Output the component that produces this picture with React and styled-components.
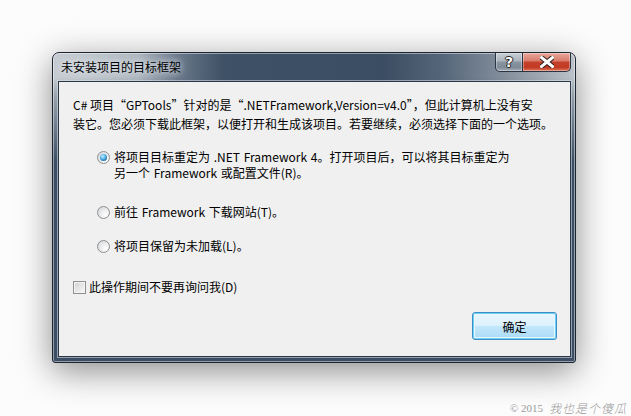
import React from 'react'
import styled, { createGlobalStyle } from 'styled-components'

const Global = createGlobalStyle`
  html, body { margin: 0; padding: 0; }
  body {
    background: #fcfcfc;
    font-family: "Noto Sans CJK SC", "Liberation Sans", sans-serif;
    font-size: 12px;
    color: #000;
  }
`

const Page = styled.div`
  width: 631px;
  height: 416px;
  box-sizing: border-box;
  padding: 52px 0 0 52px;
  display: flex;
  flex-direction: column;
  overflow: hidden;
`

const Window = styled.div`
  width: 524px;
  height: 311px;
  box-sizing: border-box;
  border: 1px solid #1c2633;
  border-radius: 7px 7px 3px 3px;
  display: flex;
  flex-direction: column;
  padding: 0 4px 5px 5px;
  background:
    linear-gradient(to bottom, rgba(60,78,98,0) 24px, rgba(60,78,98,0.35) 45px, #3c4e63 110px),
    linear-gradient(to right, #c6ccd2 0, #bfc5cc 40px, #aeb6bf 85px, #6a788a 125px, #3f5166 170px,
      #3b4d62 330px, #56667a 390px, #838e9b 450px, #a0a9b3 490px, #bcc3ca 100%);
  box-shadow: 0 8px 34px rgba(0,0,0,0.45), inset 0 0 0 1px rgba(255,255,255,0.45);
`

const TitleBar = styled.div`
  height: 28px;
  display: flex;
  align-items: flex-start;
  justify-content: space-between;
`

const Title = styled.span`
  margin: 6px 0 0 3px;
  line-height: 16px;
  color: #000;
  text-shadow: 0 0 6px rgba(235,240,245,0.95), 0 0 10px rgba(235,240,245,0.8);
`

const Controls = styled.div`
  display: flex;
`

const CtlButton = styled.div`
  height: 19px;
  width: ${p => p.$w}px;
  box-sizing: border-box;
  border: 1px solid #2b3440;
  border-top: none;
  display: flex;
  align-items: center;
  justify-content: center;
  box-shadow: inset 0 0 0 1px rgba(255,255,255,0.35);
  border-radius: ${p => p.$r};
  background: ${p => p.$red
    ? 'linear-gradient(to bottom, #e9a99a 0%, #d9796a 45%, #c5402a 50%, #c13a24 80%, #e07a5e 100%)'
    : 'linear-gradient(to bottom, #c8ced5 0%, #aab3bd 45%, #8a95a2 50%, #7f8a97 80%, #a5afba 100%)'};
  & + & { border-left: none; }
`

const Help = styled.span`
  font-family: "DejaVu Sans", sans-serif;
  font-weight: bold;
  font-size: 14px;
  line-height: 1;
  color: #fff;
  text-shadow: -1px 0 #222, 1px 0 #222, 0 -1px #222, 0 1px #222;
`

const Client = styled.div`
  flex: 1;
  background: #f0f0f0;
  border: 1px solid #2a3745;
  box-shadow: 0 0 0 1px rgba(220,228,236,0.55);
  display: flex;
  flex-direction: column;
  padding: 0 13px 0 14px;
`

const Message = styled.p`
  margin: 13px 0 0;
  line-height: 19px;
  white-space: nowrap;
`

const Options = styled.div`
  display: flex;
  flex-direction: column;
  padding-left: 24px;
`

const Option = styled.label`
  display: flex;
  align-items: flex-start;
  gap: 4px;
  margin-top: ${p => p.$mt}px;
  line-height: 16px;
  white-space: nowrap;
  word-spacing: 1px;
`

const Radio = styled.span`
  width: 13px;
  height: 13px;
  box-sizing: border-box;
  margin-top: 2px;
  flex: none;
  border-radius: 50%;
  border: 1px solid #8c8f93;
  background: radial-gradient(circle at 70% 70%, #ffffff 0%, #eeeeee 40%, #cfd1d3 100%);
  display: flex;
  align-items: center;
  justify-content: center;
  &::after {
    content: '';
    display: ${p => (p.$checked ? 'block' : 'none')};
    width: 7px;
    height: 7px;
    border-radius: 50%;
    background: radial-gradient(circle at 40% 35%, #c9eeff 0%, #58b4ea 40%, #1f6ea8 75%, #123f66 100%);
  }
`

const CheckRow = styled.label`
  display: flex;
  align-items: center;
  gap: 3px;
  margin-top: 25px;
  line-height: 16px;
`

const Box = styled.span`
  width: 13px;
  height: 13px;
  box-sizing: border-box;
  flex: none;
  border: 1px solid #8e8f8f;
  background: linear-gradient(135deg, #d0d0d0 0%, #e6e6e6 50%, #f8f8f8 100%);
  box-shadow: inset 0 0 0 1px #f4f4f4;
`

const Footer = styled.div`
  margin-top: auto;
  display: flex;
  justify-content: flex-end;
  padding-bottom: 16px;
`

const OkButton = styled.button`
  width: 85px;
  height: 28px;
  border: 1px solid #3c8dc8;
  border-radius: 3px;
  font: inherit;
  color: #000;
  box-shadow: inset 0 0 0 1px #6fd0f6, inset 0 0 0 2px #e8f7fe;
  background: linear-gradient(to bottom, #eaf6fd 0%, #dcf1fc 48%, #c2e7fc 52%, #abdbf6 100%);
`

const Credit = styled.div`
  margin: 36px 4px 0 0;
  align-self: flex-end;
  color: #9a9a9a;
  font-size: 11px;
  display: flex;
  gap: 6px;
  align-items: center;
`

const Year = styled.span`
  font-family: "Liberation Serif", serif;
  font-size: 11px;
`

const Signature = styled.span`
  font-family: "Noto Sans CJK SC", sans-serif;
  font-style: italic;
  font-weight: 300;
  font-size: 12px;
  letter-spacing: 1px;
`

export default function App() {
  return (
    <>
      <Global />
      <Page>
        <Window>
          <TitleBar>
            <Title>未安装项目的目标框架</Title>
            <Controls>
              <CtlButton $w={28} $r="0 0 0 5px"><Help>?</Help></CtlButton>
              <CtlButton $w={48} $r="0 0 5px 0" $red>
                <svg width="14" height="12" viewBox="0 0 14 12">
                  <path d="M1.5 1.5 L12.5 10.5 M12.5 1.5 L1.5 10.5" stroke="#2a1a18" strokeWidth="5" strokeLinecap="square" />
                  <path d="M1.5 1.5 L12.5 10.5 M12.5 1.5 L1.5 10.5" stroke="#fff" strokeWidth="3" strokeLinecap="square" />
                </svg>
              </CtlButton>
            </Controls>
          </TitleBar>
          <Client>
            <Message>
              C# 项目“GPTools”针对的是“.NETFramework,Version=v4.0”，但此计算机上没有安
              <br />
              装它。您必须下载此框架，以便打开和生成该项目。若要继续，必须选择下面的一个选项。
            </Message>
            <Options>
              <Option $mt={16}>
                <Radio $checked />
                <span>
                  将项目目标重定为 .NET Framework 4。打开项目后，可以将其目标重定为
                  <br />
                  另一个 Framework 或配置文件(R)。
                </span>
              </Option>
              <Option $mt={23}>
                <Radio />
                <span>前往 Framework 下载网站(T)。</span>
              </Option>
              <Option $mt={18}>
                <Radio />
                <span>将项目保留为未加载(L)。</span>
              </Option>
            </Options>
            <CheckRow>
              <Box />
              <span>此操作期间不要再询问我(D)</span>
            </CheckRow>
            <Footer>
              <OkButton>确定</OkButton>
            </Footer>
          </Client>
        </Window>
        <Credit>
          <Year>© 2015</Year>
          <Signature>我也是个傻瓜</Signature>
        </Credit>
      </Page>
    </>
  )
}
